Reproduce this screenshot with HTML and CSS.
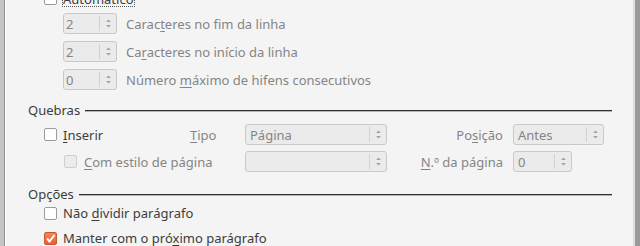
FILE: index.html
```html
<!DOCTYPE html>
<html>
<head>
<meta charset="utf-8">
<link rel="stylesheet" href="styles.css">
</head>
<body>
<div class="frame">
  <div class="edge-left"></div>
  <div class="panel">
    <div class="row top-row">
      <span class="check"></span>
      <span class="label focus">Automático</span>
    </div>
    <div class="spins">
      <div class="row spin-row">
        <div class="spin"><span class="val">2</span><span class="div"></span><svg class="arr" width="7" height="11" viewBox="0 0 7 11"><path d="M1 4 L3.5 1.5 L6 4 Z M1 7 L3.5 9.5 L6 7 Z" fill="#a4a4a4"/></svg></div>
        <span class="label dis">Carac<u>t</u>eres no fim da linha</span>
      </div>
      <div class="row spin-row">
        <div class="spin"><span class="val">2</span><span class="div"></span><svg class="arr" width="7" height="11" viewBox="0 0 7 11"><path d="M1 4 L3.5 1.5 L6 4 Z M1 7 L3.5 9.5 L6 7 Z" fill="#a4a4a4"/></svg></div>
        <span class="label dis">Ca<u>r</u>acteres no início da linha</span>
      </div>
      <div class="row spin-row">
        <div class="spin"><span class="val">0</span><span class="div"></span><svg class="arr" width="7" height="11" viewBox="0 0 7 11"><path d="M1 4 L3.5 1.5 L6 4 Z M1 7 L3.5 9.5 L6 7 Z" fill="#a4a4a4"/></svg></div>
        <span class="label dis">Número <u>m</u>áximo de hifens consecutivos</span>
      </div>
    </div>

    <div class="section">
      <span class="sec-title">Quebras</span><span class="sec-line"></span>
    </div>
    <div class="row form-row r1">
      <div class="cell-a">
        <span class="check"></span>
        <span class="label"><u>I</u>nserir</span>
      </div>
      <span class="label dis cell-tipo"><u>T</u>ipo</span>
      <div class="combo wide"><span class="val">Página</span><span class="div"></span><svg class="arr" width="7" height="11" viewBox="0 0 7 11"><path d="M1 4 L3.5 1.5 L6 4 Z M1 7 L3.5 9.5 L6 7 Z" fill="#a4a4a4"/></svg></div>
      <span class="label dis cell-right">Po<u>s</u>ição</span>
      <div class="combo narrow"><span class="val">Antes</span><span class="div"></span><svg class="arr" width="7" height="11" viewBox="0 0 7 11"><path d="M1 4 L3.5 1.5 L6 4 Z M1 7 L3.5 9.5 L6 7 Z" fill="#a4a4a4"/></svg></div>
    </div>
    <div class="row form-row r2">
      <div class="cell-a sub">
        <span class="check disabled"></span>
        <span class="label dis"><u>C</u>om estilo de página</span>
      </div>
      <div class="combo wide"><span class="val"></span><span class="div"></span><svg class="arr" width="7" height="11" viewBox="0 0 7 11"><path d="M1 4 L3.5 1.5 L6 4 Z M1 7 L3.5 9.5 L6 7 Z" fill="#a4a4a4"/></svg></div>
      <span class="label dis cell-right"><u>N</u>.º da página</span>
      <div class="combo pspin"><span class="val">0</span><span class="div"></span><svg class="arr" width="7" height="11" viewBox="0 0 7 11"><path d="M1 4 L3.5 1.5 L6 4 Z M1 7 L3.5 9.5 L6 7 Z" fill="#a4a4a4"/></svg></div>
    </div>

    <div class="section s2">
      <span class="sec-title">Opções</span><span class="sec-line"></span>
    </div>
    <div class="row opt-row first">
      <span class="check"></span>
      <span class="label">Não <u>d</u>ividir parágrafo</span>
    </div>
    <div class="row opt-row second">
      <span class="check on"><svg width="13" height="13" viewBox="0 0 13 13"><path d="M3 6.5 L5.5 9.5 L10.5 3" fill="none" stroke="#fff" stroke-width="2"/></svg></span>
      <span class="label">Manter com o pró<u>x</u>imo parágrafo</span>
    </div>
  </div>
  <div class="edge-right"></div>
</div>
</body>
</html>
```
FILE: styles.css
```css
html, body {
  margin: 0;
  padding: 0;
}
body {
  width: 640px;
  height: 246px;
  overflow: hidden;
  background: #f2f1f0;
  font-family: "Noto Sans", "Open Sans", sans-serif;
  font-size: 13px;
  color: #3c3c3c;
}
.frame {
  display: flex;
  height: 246px;
  overflow: hidden;
}
.edge-left {
  width: 4px;
  background: #c4c4c4;
  border-right: 1px solid #8f8f8f;
}
.edge-right {
  width: 5px;
  background: #9a9a9a;
  border-left: 1px solid #e2e2e2;
}
.panel {
  flex: 1;
  background: #f4f4f4;
  border-left: 1px solid #ffffff;
  border-right: 1px solid #dadada;
  display: flex;
  flex-direction: column;
  padding-left: 38px;
}
.row {
  display: flex;
  align-items: center;
}
.label {
  white-space: nowrap;
  line-height: 16px;
}
.dis {
  color: #858585;
}
u {
  text-decoration-thickness: 1px;
  text-underline-offset: 2px;
}
.check {
  width: 11px;
  height: 11px;
  border: 1px solid #9c9c9c;
  border-radius: 2px;
  background: #ffffff;
  flex: none;
  display: flex;
}
.check.disabled {
  border-color: #cfcfcf;
  background: #ececec;
}
.check.on {
  border-color: #c9572e;
  background: linear-gradient(#f4855a, #e4622f);
}
.check.on svg {
  margin: -1px;
}
.top-row {
  height: 13px;
  margin-top: -8px;
}
.top-row .label {
  margin-left: 6px;
  outline: 1px dotted #555;
  line-height: 14px;
}
.spins {
  display: flex;
  flex-direction: column;
  gap: 7px;
  margin-top: 8px;
  padding-left: 19px;
}
.spin, .combo {
  height: 19px;
  border: 1px solid #c9c9c9;
  border-radius: 3px;
  background: #ebebeb;
  display: flex;
  align-items: center;
  flex: none;
}
.spin {
  width: 52px;
}
.val {
  flex: 1;
  padding-left: 2px;
  color: #858585;
}
.div {
  width: 1px;
  height: 15px;
  background: #d2d2d2;
}
.arr {
  margin: 0 4px 0 5px;
}
.spin-row .label {
  margin-left: 9px;
}
.section {
  display: flex;
  align-items: center;
  height: 18px;
  margin: 11px 21px 0 -16px;
}
.sec-title {
  color: #3c3c3c;
}
.sec-line {
  flex: 1;
  height: 1px;
  background: #2f2f2f;
  margin-left: 5px;
  box-shadow: 0 0.5px 0 #777;
}
.form-row {
  height: 21px;
}
.r1 {
  margin-top: 5px;
}
.r2 {
  margin-top: 6px;
}
.cell-a {
  display: flex;
  align-items: center;
  gap: 6px;
  width: 146px;
  flex: none;
}
.cell-a.sub {
  width: 181px;
  padding-left: 20px;
  gap: 7px;
}
.cell-tipo {
  width: 55px;
  flex: none;
}
.combo.wide {
  width: 140px;
}
.combo.narrow {
  width: 89px;
}
.combo.pspin {
  width: 57px;
}
.combo .val {
  padding-left: 4px;
}
.cell-right {
  width: 116px;
  padding-right: 10px;
  text-align: right;
  flex: none;
}
.s2 {
  margin-top: 13px;
}
.opt-row {
  height: 18px;
}
.opt-row .label {
  margin-left: 6px;
}
.opt-row.first {
  margin-top: 2px;
}
.opt-row.second {
  margin-top: 9px;
}
```
